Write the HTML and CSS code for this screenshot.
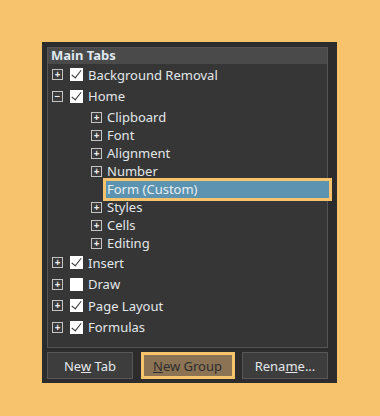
FILE: index.html
```html
<!DOCTYPE html>
<html lang="en">
<head>
    <meta charset="UTF-8">
    <meta name="viewport" content="width=device-width, initial-scale=1.0">
    <title>Customize Ribbon - Main Tabs</title>
    <link rel="stylesheet" href="styles.css">
</head>
<body>

    <div class="panel">
        <div class="tree">
            <div class="tree-head">Main Tabs</div>

            <div class="row top">
                <span class="exp">+</span><span class="chk on"></span>Background Removal
            </div>
            <div class="row top">
                <span class="exp">&minus;</span><span class="chk on"></span>Home
            </div>

            <div class="children">
                <div class="row child"><span class="exp">+</span>Clipboard</div>
                <div class="row child"><span class="exp">+</span>Font</div>
                <div class="row child"><span class="exp">+</span>Alignment</div>
                <div class="row child"><span class="exp">+</span>Number</div>
                <div class="row child selected"><span class="sel">Form (Custom)</span></div>
                <div class="row child"><span class="exp">+</span>Styles</div>
                <div class="row child"><span class="exp">+</span>Cells</div>
                <div class="row child"><span class="exp">+</span>Editing</div>
            </div>

            <div class="row top">
                <span class="exp">+</span><span class="chk on"></span>Insert
            </div>
            <div class="row top">
                <span class="exp">+</span><span class="chk"></span>Draw
            </div>
            <div class="row top">
                <span class="exp">+</span><span class="chk on"></span>Page Layout
            </div>
            <div class="row top">
                <span class="exp">+</span><span class="chk on"></span>Formulas
            </div>
        </div>

        <div class="buttons">
            <button class="btn">Ne<u>w</u> Tab</button>
            <button class="btn active"><u>N</u>ew Group</button>
            <button class="btn">Rena<u>m</u>e...</button>
        </div>
    </div>

</body>
</html>
```

FILE: styles.css
```css
body { margin: 0; background: #f7c46d; font-family: "Noto Sans", "Open Sans", sans-serif; font-size: 13px; color: #e3e7ea; }

.panel { margin: 42px 0 0 42px; width: 295px; height: 341px; box-sizing: border-box; background: #2c2c2c; padding: 5px 9px 3px 5px; display: flex; flex-direction: column; gap: 4px; }

.tree { height: 301px; box-sizing: border-box; border: 1px solid #555; background: #363636; }
.tree-head { height: 16px; line-height: 15px; background: #4a4a4a; font-weight: bold; padding-left: 3px; color: #dfe8f0; }

.row { display: flex; align-items: center; white-space: nowrap; }
.row.top { height: 21.5px; padding-left: 4px; }
.row.child { height: 18px; padding-left: 43px; }
.children { padding-top: 1px; }

.exp { width: 9px; height: 9px; border: 1px solid #c4c4c4; background: #3a3a3a; color: #eee; font-size: 10px; line-height: 8px; text-align: center; font-weight: bold; margin-right: 7px; flex: none; }
.row.child .exp { margin-right: 5px; }

.chk { width: 13px; height: 13px; background: #fff; margin-right: 5px; flex: none; position: relative; }
.chk.on::after { content: ""; position: absolute; left: 4px; top: 0px; width: 4px; height: 9px; border: solid #333; border-width: 0 1.5px 1.5px 0; transform: rotate(38deg); }

.row.child.selected { padding-left: 55px; }
.sel { flex: none; width: 222px; height: 17px; line-height: 17px; padding-left: 1px; background: #5c93b0; border: 3px solid #f7c46d; color: #e8eef2; }

.buttons { display: flex; justify-content: space-between; }
.btn { width: 86px; height: 27px; background: #3d3d3d; border: 1px solid #575757; color: #e3e7ea; font-family: inherit; font-size: 13px; padding: 0; }
.btn.active { width: 94px; background: #8b7354; border: 3px solid #f7c46d; color: #2e2e2e; }
```
